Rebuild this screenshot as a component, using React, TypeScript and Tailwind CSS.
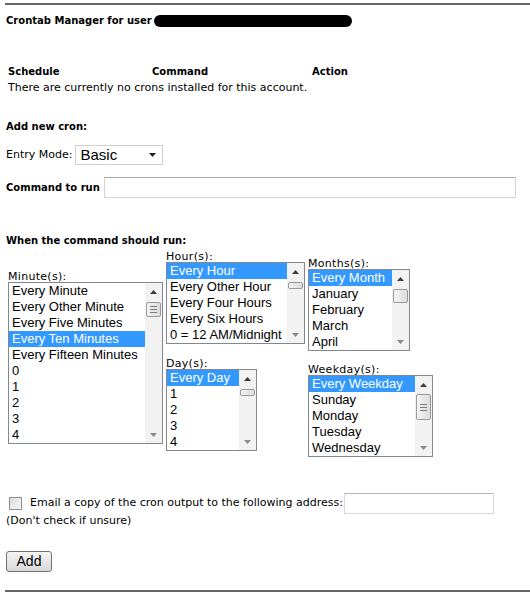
import type { ReactNode } from 'react';

const MINUTES = ['Every Minute', 'Every Other Minute', 'Every Five Minutes', 'Every Ten Minutes', 'Every Fifteen Minutes', '0', '1', '2', '3', '4'];
const HOURS = ['Every Hour', 'Every Other Hour', 'Every Four Hours', 'Every Six Hours', '0 = 12 AM/Midnight'];
const DAYS = ['Every Day', '1', '2', '3', '4'];
const MONTHS = ['Every Month', 'January', 'February', 'March', 'April'];
const WEEKDAYS = ['Every Weekday', 'Sunday', 'Monday', 'Tuesday', 'Wednesday'];

function Scrollbar({ thumbTop, thumbHeight, grip }: { thumbTop: number; thumbHeight: number; grip?: boolean })
{
    return (
        <div className="relative w-[17px] shrink-0 self-stretch bg-[#f2f2f2]">
            {/* up arrow */}
            <div className="flex h-[17px] items-center justify-center">
                <svg width="7" height="4" viewBox="0 0 7 4"><path d="M0 4 L3.5 0 L7 4 Z" fill="#3a3a3a" /></svg>
            </div>
            {/* thumb */}
            <div
                className="absolute left-[1px] right-[1px] flex flex-col items-center justify-center gap-[2px] rounded-[2px] border border-[#9a9a9a] bg-gradient-to-r from-[#f4f4f4] to-[#dcdcdc]"
                style={{ top: thumbTop, height: thumbHeight }}
            >
                {grip && (
                    <>
                        <div className="h-[1px] w-[7px] bg-[#7a7a7a]" />
                        <div className="h-[1px] w-[7px] bg-[#7a7a7a]" />
                        <div className="h-[1px] w-[7px] bg-[#7a7a7a]" />
                    </>
                )}
            </div>
            {/* down arrow */}
            <div className="absolute bottom-0 left-0 flex h-[17px] w-full items-center justify-center">
                <svg width="7" height="4" viewBox="0 0 7 4"><path d="M0 0 L3.5 4 L7 0 Z" fill="#8a8a8a" /></svg>
            </div>
        </div>
    );
}

function ListBox({ items, width, selected, thumbTop, thumbHeight, grip }: { items: string[]; width: number; selected: number; thumbTop: number; thumbHeight: number; grip?: boolean })
{
    return (
        <div className="flex border border-[#828790] bg-white" style={{ width }}>
            <div className="min-w-0 flex-1">
                {items.map((item, i) => (
                    <div
                        key={i}
                        className={`h-[16px] whitespace-nowrap pl-[3px] font-['Liberation_Sans',Arial,sans-serif] text-[13px] leading-[16px] ${i === selected ? 'bg-[#3399ff] text-white' : ''}`}
                    >
                        {item}
                    </div>
                ))}
            </div>
            <Scrollbar thumbTop={thumbTop} thumbHeight={thumbHeight} grip={grip} />
        </div>
    );
}

function Field({ label, children, className = '' }: { label: string; children: ReactNode; className?: string })
{
    return (
        <div className={className}>
            <div className="text-[11px] leading-[11px] tracking-[0.3px]">{label}</div>
            {children}
        </div>
    );
}

export default function App()
{
    return (
        <div className="w-[530px] bg-white font-['DejaVu_Sans',Verdana,sans-serif] text-[10px] text-black">
            <div className="mt-[3px] ml-[5px] h-[2px] bg-[#666]" />

            {/* ── Title ── */}
            <div className="mt-[9px] flex items-center pl-[6px] font-bold leading-[13px]">
                <span>Crontab Manager for user</span>
                <span className="ml-[2px] inline-block h-[12px] w-[198px] rounded-full bg-black" />
            </div>

            {/* ── Existing crons ── */}
            <div className="mt-[37px] pl-[8px] leading-[16px]">
                <div className="flex font-bold">
                    <div className="w-[144px]">Schedule</div>
                    <div className="w-[160px]">Command</div>
                    <div>Action</div>
                </div>
                <div className="text-[11px]">There are currently no crons installed for this account.</div>
            </div>

            {/* ── Add new ── */}
            <div className="mt-[24px] pl-[6px] font-bold leading-[13px]">Add new cron:</div>

            <div className="mt-[12px] flex items-center pl-[6px]">
                <span className="text-[11px]">Entry Mode:</span>
                <div className="ml-[3px] flex h-[20px] w-[88px] items-center justify-between border border-[#cfcfcf] bg-white pl-[4px] pr-[6px] font-['Liberation_Sans',Arial,sans-serif] text-[15px]">
                    <span>Basic</span>
                    <svg width="7" height="4" viewBox="0 0 7 4"><path d="M0 0 L3.5 4 L7 0 Z" fill="#222" /></svg>
                </div>
            </div>

            <div className="mt-[12px] flex items-center pl-[6px]">
                <span className="font-bold">Command to run</span>
                <div className="ml-[4px] h-[21px] w-[412px] border border-[#d4d4d4] border-t-[#a8a8a8] bg-white" />
            </div>

            <div className="mt-[36px] pl-[6px] font-bold leading-[13px]">When the command should run:</div>

            {/* ── Schedule pickers ── */}
            <div className="mt-[3px] flex items-start gap-[3px] pl-[8px]">
                <Field label="Minute(s):" className="pt-[21px]">
                    <ListBox items={MINUTES} width={155} selected={3} thumbTop={19} thumbHeight={15} grip />
                </Field>
                <div className="pt-[1px]">
                    <Field label="Hour(s):">
                        <ListBox items={HOURS} width={139} selected={0} thumbTop={19} thumbHeight={7} />
                    </Field>
                    <Field label="Day(s):" className="mt-[14px]">
                        <ListBox items={DAYS} width={91} selected={0} thumbTop={19} thumbHeight={7} />
                    </Field>
                </div>
                <div className="pt-[8px]">
                    <Field label="Months(s):">
                        <ListBox items={MONTHS} width={102} selected={0} thumbTop={19} thumbHeight={14} />
                    </Field>
                    <Field label="Weekday(s):" className="mt-[13px]">
                        <ListBox items={WEEKDAYS} width={125} selected={0} thumbTop={18} thumbHeight={26} grip />
                    </Field>
                </div>
            </div>

            {/* ── Email ── */}
            <div className="mt-[36px] flex items-center pl-[9px] text-[11px]">
                <div className="h-[13px] w-[13px] border border-[#8f8f8f] bg-gradient-to-br from-[#dcdcdc] to-[#f6f6f6]" />
                <span className="ml-[8px]">Email a copy of the cron output to the following address:</span>
                <div className="ml-[1px] h-[21px] w-[150px] border border-[#d8d8d8] border-t-[#b4b4b4] bg-white" />
            </div>
            <div className="pl-[6px] text-[11px] leading-[13px]">(Don't check if unsure)</div>

            <div className="mt-[24px] pl-[6px]">
                <div className="flex h-[21px] w-[46px] items-center justify-center rounded-[3px] border border-[#707070] bg-gradient-to-b from-[#f4f4f4] to-[#d9d9d9] font-['Liberation_Sans',Arial,sans-serif] text-[14px]">
                    Add
                </div>
            </div>

            <div className="mt-[18px] ml-[5px] h-[2px] bg-[#666]" />
        </div>
    );
}
